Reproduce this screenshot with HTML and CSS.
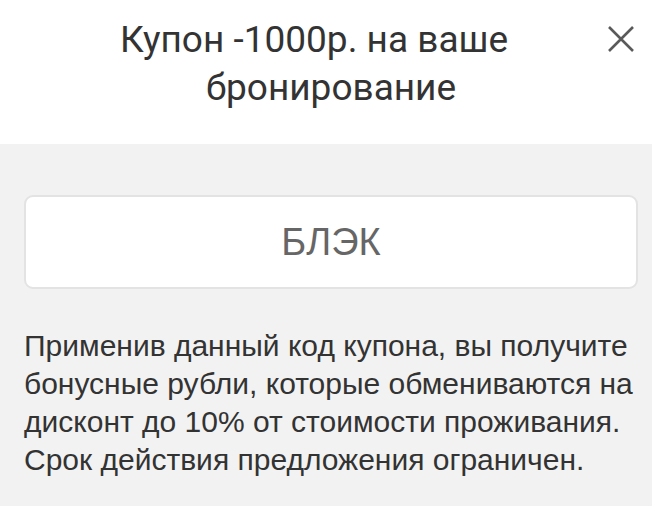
FILE: index.html
```html
<!DOCTYPE html>
<html lang="ru">
<head>
<meta charset="utf-8">
<title>Купон</title>
<link rel="stylesheet" href="styles.css">
</head>
<body>
<div class="sheet">
  <header class="sheet-head">
    <h1 class="sheet-title"><span class="title-line title-line-first">Купон -1000р. на ваше</span> <span class="title-line">бронирование</span></h1>
    <button class="close-btn" aria-label="Закрыть">
      <svg viewBox="0 0 28 28" width="28" height="28"><path d="M2 2 L26 26 M26 2 L2 26" stroke="#5a5a5a" stroke-width="2.6" fill="none"/></svg>
    </button>
  </header>
  <section class="sheet-body">
    <div class="coupon-code">БЛЭК</div>
    <p class="coupon-note">Применив данный код купона, вы получите бонусные рубли, которые обмениваются на дисконт до 10% от стоимости проживания. Срок действия предложения ограничен.</p>
  </section>
</div>
</body>
</html>
```
FILE: styles.css
```css
html, body {
  margin: 0;
  padding: 0;
  background: #f2f2f2;
}

.sheet {
  width: 652px;
  min-height: 506px;
  display: flex;
  flex-direction: column;
}

.sheet-head {
  position: relative;
  background: #fff;
  height: 144px;
  box-sizing: border-box;
  padding: 16px 54px 0 64px;
}

.sheet-title {
  margin: 0;
  font-family: Roboto, "Liberation Sans", sans-serif;
  font-weight: 400;
  font-size: 37px;
  line-height: 48px;
  color: #333;
  text-align: center;
}

.title-line {
  display: block;
}

.title-line-first {
  padding-right: 34px;
}

.close-btn {
  position: absolute;
  top: 24px;
  right: 16px;
  width: 30px;
  height: 30px;
  padding: 0;
  border: 0;
  background: none;
  display: flex;
  align-items: center;
  justify-content: center;
}

.sheet-body {
  flex: 1;
  background: #f2f2f2;
  padding: 51px 14px 0 24px;
}

.coupon-code {
  height: 90px;
  background: #fff;
  border: 2px solid #e3e3e3;
  border-radius: 9px;
  display: flex;
  align-items: center;
  justify-content: center;
  font-family: "Liberation Sans", Arial, sans-serif;
  font-size: 38px;
  color: #666;
}

.coupon-note {
  margin: 38px 0 0;
  font-family: "Liberation Sans", Arial, sans-serif;
  font-size: 30px;
  line-height: 38px;
  color: #333;
}
```
